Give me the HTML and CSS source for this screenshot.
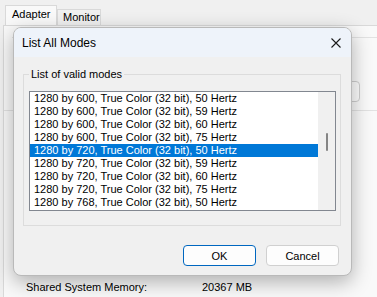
FILE: index.html
```html
<!DOCTYPE html>
<html lang="en">
<head>
    <meta charset="UTF-8">
    <title>List All Modes</title>
    <link rel="stylesheet" href="styles.css">
</head>
<body>
    <div class="tabs">
        <div class="tab active">Adapter</div>
        <div class="tab">Monitor</div>
    </div>
    <div class="page">
        <div class="box top-box">
            <div class="ghost-btn"></div>
        </div>
        <div class="box info-box">
            <div class="info-row">
                <span class="info-label">Shared System Memory:</span>
                <span>20367 MB</span>
            </div>
        </div>
    </div>

    <div class="dialog">
        <div class="titlebar">
            <span>List All Modes</span>
            <svg class="close" width="10" height="10" viewBox="0 0 10 10">
                <path d="M0.5 0.5 L9.5 9.5 M9.5 0.5 L0.5 9.5" stroke="#1a1a1a" stroke-width="1.1" fill="none"/>
            </svg>
        </div>
        <div class="dialog-body">
            <fieldset class="group">
                <legend>List of valid modes</legend>
                <div class="listbox">
                    <div class="rows">
                        <div class="row">1280 by 600, True Color (32 bit), 50 Hertz</div>
                        <div class="row">1280 by 600, True Color (32 bit), 59 Hertz</div>
                        <div class="row">1280 by 600, True Color (32 bit), 60 Hertz</div>
                        <div class="row">1280 by 600, True Color (32 bit), 75 Hertz</div>
                        <div class="row selected">1280 by 720, True Color (32 bit), 50 Hertz</div>
                        <div class="row">1280 by 720, True Color (32 bit), 59 Hertz</div>
                        <div class="row">1280 by 720, True Color (32 bit), 60 Hertz</div>
                        <div class="row">1280 by 720, True Color (32 bit), 75 Hertz</div>
                        <div class="row">1280 by 768, True Color (32 bit), 50 Hertz</div>
                    </div>
                    <div class="scrollbar"><div class="thumb"></div></div>
                </div>
            </fieldset>
            <div class="buttons">
                <button class="btn default">OK</button>
                <button class="btn">Cancel</button>
            </div>
        </div>
    </div>
</body>
</html>
```

FILE: styles.css
```css
html, body {
    margin: 0;
    overflow: hidden;
}
body {
    width: 377px;
    height: 297px;
    background-color: #f0f0f0;
    font-family: "Liberation Sans", Arial, sans-serif;
    font-size: 11px;
    color: #000;
    position: relative;
}
.tabs {
    display: flex;
    align-items: flex-end;
    height: 25px;
    padding-left: 5px;
}
.tab {
    box-sizing: border-box;
    height: 16px;
    width: 44px;
    padding-left: 5px;
    line-height: 15px;
    border: 1px solid #d9d9d9;
    border-bottom: none;
    background-color: #f0f0f0;
}
.tab.active {
    height: 20px;
    width: 52px;
    padding-left: 6px;
    line-height: 17px;
    background-color: #f9f9f9;
}
.page {
    box-sizing: border-box;
    margin-left: 3px;
    height: 272px;
    padding: 11px 0 0 0;
    border-top: 1px solid #d9d9d9;
    border-left: 1px solid #d9d9d9;
    background-color: #f9f9f9;
    overflow: hidden;
}
.box {
    border-top: 1px solid #e2e2e2;
}
.top-box {
    display: flex;
    justify-content: flex-end;
    height: 72px;
    margin-left: 8px;
}
.ghost-btn {
    box-sizing: border-box;
    width: 30px;
    height: 21px;
    margin: 43px 17px 0 0;
    border: 1px solid #cfcfcf;
    border-radius: 4px;
    background-color: #fdfdfd;
}
.info-box {
    padding-top: 168px;
}
.info-row {
    display: flex;
    padding-left: 22px;
    line-height: 16px;
}
.info-label {
    width: 176px;
}

/* dialog */
.dialog {
    position: absolute;
    left: 13px;
    top: 27px;
    box-sizing: border-box;
    width: 339px;
    height: 249px;
    border: 1px solid #b9b9b9;
    border-radius: 8px;
    background-color: #f0f0f0;
    box-shadow: 0 6px 20px rgba(0, 0, 0, 0.3);
    overflow: hidden;
}
.titlebar {
    display: flex;
    align-items: center;
    justify-content: space-between;
    height: 29px;
    padding: 0 10px 0 8px;
    background-color: #eef3fa;
    font-size: 12px;
}
.close {
    display: block;
}
.dialog-body {
    padding: 9px 10px 0 9px;
}
.group {
    margin: 0;
    padding: 9px 4px 14px 5px;
    border: 1px solid #dcdcdc;
    min-inline-size: 0;
}
.group legend {
    padding: 0 2px;
    line-height: 16px;
}
.listbox {
    display: flex;
    height: 118px;
    border: 1px solid #828790;
    background-color: #fff;
}
.rows {
    flex: 1;
}
.row {
    height: 13px;
    line-height: 13px;
    padding-left: 4px;
    white-space: nowrap;
}
.row.selected {
    background-color: #0078d7;
    color: #fff;
}
.scrollbar {
    width: 17px;
    background-color: #f0f0f0;
    padding-top: 41px;
    box-sizing: border-box;
}
.thumb {
    width: 2px;
    height: 18px;
    margin-left: 8px;
    background-color: #858585;
    border-radius: 1px;
}
.buttons {
    display: flex;
    justify-content: flex-end;
    gap: 10px;
    margin-top: 19px;
    padding-right: 2px;
}
.btn {
    box-sizing: border-box;
    width: 73px;
    height: 21px;
    padding: 0;
    border: 1px solid #d0d0d0;
    border-radius: 4px;
    background-color: #fdfdfd;
    font-family: inherit;
    font-size: 11px;
    color: #000;
}
.btn.default {
    border-color: #0067c0;
}
```
